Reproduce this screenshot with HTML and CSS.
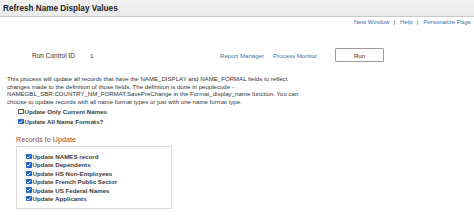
FILE: index.html
```html
<!DOCTYPE html>
<html>
<head>
<meta charset="utf-8">
<link rel="stylesheet" href="styles.css">
</head>
<body>
<div class="hdr"><span class="title">Refresh Name Display Values</span></div>
<div class="toplinks"><a class="lnk">New Window</a><span class="sep">|</span><a class="lnk">Help</a><span class="sep">|</span><a class="lnk">Personalize Page</a></div>
<div class="runrow">
  <span class="lbl">Run Control ID</span>
  <span class="val">1</span>
  <a class="lnk rm">Report Manager</a>
  <a class="lnk pm">Process Monitor</a>
  <span class="btn">Run</span>
</div>
<p class="desc">This process will update all records that have the NAME_DISPLAY and NAME_FORMAL fields to reflect<br>changes made to the definition of those fields. The definition is done in peoplecode -<br>NAMEGBL_SBR.COUNTRY_NM_FORMAT.SavePreChange in the Format_display_name function. You can<br>choose to update records with all name format types or just with one name format type.</p>
<div class="opts">
  <div class="cbrow"><span class="cb"></span><span>Update Only Current Names</span></div>
  <div class="cbrow"><span class="cb on"><svg viewBox="0 0 10 10" width="5.5" height="5.5"><path d="M2 5.2 L4.2 7.4 L8 2.8" fill="none" stroke="#fff" stroke-width="1.8"/></svg></span><span>Update All Name Formats?</span></div>
</div>
<div class="sectitle">Records to Update</div>
<div class="box">
  <div class="cbrow tight"><span class="cb on"><svg viewBox="0 0 10 10" width="5.5" height="5.5"><path d="M2 5.2 L4.2 7.4 L8 2.8" fill="none" stroke="#fff" stroke-width="1.8"/></svg></span><span>Update NAMES record</span></div>
  <div class="cbrow tight"><span class="cb on"><svg viewBox="0 0 10 10" width="5.5" height="5.5"><path d="M2 5.2 L4.2 7.4 L8 2.8" fill="none" stroke="#fff" stroke-width="1.8"/></svg></span><span>Update Dependents</span></div>
  <div class="cbrow tight"><span class="cb on"><svg viewBox="0 0 10 10" width="5.5" height="5.5"><path d="M2 5.2 L4.2 7.4 L8 2.8" fill="none" stroke="#fff" stroke-width="1.8"/></svg></span><span>Update HS Non-Employees</span></div>
  <div class="cbrow tight"><span class="cb on"><svg viewBox="0 0 10 10" width="5.5" height="5.5"><path d="M2 5.2 L4.2 7.4 L8 2.8" fill="none" stroke="#fff" stroke-width="1.8"/></svg></span><span>Update French Public Sector</span></div>
  <div class="cbrow tight"><span class="cb on"><svg viewBox="0 0 10 10" width="5.5" height="5.5"><path d="M2 5.2 L4.2 7.4 L8 2.8" fill="none" stroke="#fff" stroke-width="1.8"/></svg></span><span>Update US Federal Names</span></div>
  <div class="cbrow tight"><span class="cb on"><svg viewBox="0 0 10 10" width="5.5" height="5.5"><path d="M2 5.2 L4.2 7.4 L8 2.8" fill="none" stroke="#fff" stroke-width="1.8"/></svg></span><span>Update Applicants</span></div>
</div>
</body>
</html>
```
FILE: styles.css
```css
html, body {
  margin: 0;
  padding: 0;
  background: #fff;
  font-family: "Liberation Sans", Arial, sans-serif;
  color: #333;
  font-size: 6.1px;
}
.hdr {
  height: 16px;
  background: linear-gradient(#f3f3f3, #e9e9e9);
  border-bottom: 1px solid #c9c9c9;
  display: flex;
  align-items: center;
  padding-left: 3px;
}
.title {
  font-weight: bold;
  font-size: 8.2px;
  color: #222;
}
.toplinks {
  margin-top: 1px;
  height: 7px;
  line-height: 7px;
  display: flex;
  justify-content: flex-end;
  padding-right: 3px;
}
.lnk {
  color: #3c6fa8;
  text-decoration: none;
}
.sep {
  color: #555;
  margin: 0 5px 0 4px;
}
.runrow {
  margin-top: 23px;
  display: flex;
  align-items: center;
  height: 14px;
  padding-left: 32px;
}
.lbl { width: 58px; font-size: 6.5px; }
.val { width: 130px; }
.rm { width: 53px; }
.pm { width: 62px; }
.btn {
  width: 47px;
  height: 12px;
  border: 1px solid #9a9a9a;
  border-radius: 1px;
  display: flex;
  align-items: center;
  justify-content: center;
  background: #fff;
}
.desc {
  margin: 13px 0 0 0;
  padding-left: 7px;
  line-height: 7.6px;
  white-space: nowrap;
}
.opts {
  margin-top: 1px;
  padding-left: 18px;
}
.cbrow {
  display: flex;
  align-items: center;
  height: 10px;
  font-weight: bold;
  font-size: 6.2px;
  color: #3a3a3a;
}
.cbrow.tight { height: 8.4px; }
.cb {
  width: 5.5px;
  height: 5.5px;
  box-sizing: border-box;
  border: 0.7px solid #555;
  border-radius: 0.8px;
  background: #fff;
  margin-right: 1px;
  display: flex;
  flex-shrink: 0;
}
.cb.on {
  border: none;
  background: #2463cf;
}
.sectitle {
  margin-top: 10px;
  padding-left: 16px;
  height: 8px;
  line-height: 8px;
  font-size: 7.2px;
  color: #9c4a26;
}
.box {
  margin: 2px 0 0 16px;
  width: 145px;
  border: 1px solid #dadada;
  padding: 5px 0 5px 9px;
}
```
